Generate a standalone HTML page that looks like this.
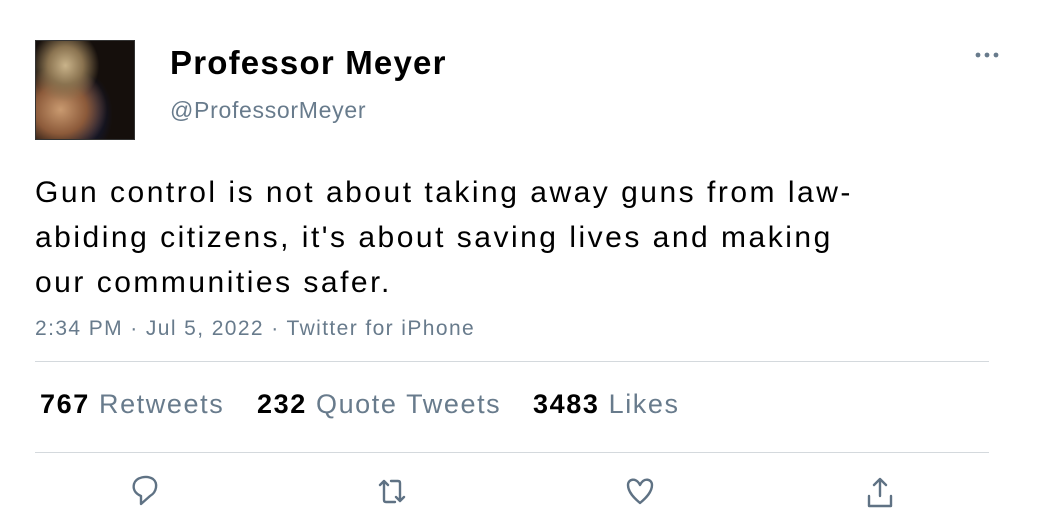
<html><head><style>
body{margin:0;width:1050px;height:525px;background:#fff;font-family:"Liberation Sans",sans-serif;position:relative;overflow:hidden}
.a{position:absolute}
.g{color:#687b8c}
.s{position:absolute;top:389px;font-size:27px;letter-spacing:1.6px;white-space:nowrap}
</style></head><body>
<div class="a" style="left:35px;top:40px;width:100px;height:100px;background:radial-gradient(ellipse at 30% 25%,#c9b38a 0,#8a7350 18%,transparent 35%),radial-gradient(ellipse at 25% 70%,#c99a70 0,#8c5a3a 25%,transparent 45%),radial-gradient(ellipse at 50% 75%,#1c2040 0,#141830 20%,transparent 40%),#150f0c;border:1px solid #333;box-sizing:border-box"></div>
<div class="a" style="left:170px;top:44px;font-size:33px;font-weight:bold;color:#000;letter-spacing:1.2px">Professor Meyer</div>
<div class="a g" style="left:170px;top:97px;font-size:23px;letter-spacing:0.7px">@ProfessorMeyer</div>
<svg class="a" style="left:970px;top:48px" width="34" height="14" fill="#687b8c"><circle cx="8" cy="7" r="2.4"/><circle cx="17" cy="7" r="2.4"/><circle cx="26" cy="7" r="2.4"/></svg>
<div class="a" style="left:35px;top:170px;font-size:30px;line-height:45px;color:#000;width:900px;letter-spacing:2.5px">Gun control is not about taking away guns from law-<br>abiding citizens, it's about saving lives and making<br>our communities safer.</div>
<div class="a g" style="left:35px;top:317px;font-size:21px;letter-spacing:1.4px">2:34 PM · Jul 5, 2022 · Twitter for iPhone</div>
<div class="a" style="left:35px;top:361px;width:954px;height:1px;background:#d4d9dd"></div>
<div class="s" style="left:40px"><b>767</b> <span class="g">Retweets</span></div>
<div class="s" style="left:257px"><b>232</b> <span class="g">Quote Tweets</span></div>
<div class="s" style="left:533px"><b>3483</b> <span class="g">Likes</span></div>
<div class="a" style="left:35px;top:452px;width:954px;height:1px;background:#d4d9dd"></div>
<svg class="a" style="left:0;top:0" width="1050" height="525" fill="none" stroke="#5f7284" stroke-width="2.4" stroke-linecap="round" stroke-linejoin="round">
<path d="M141 504 L141 496 C134 493 133 488 134 484 C136 477 147 475 153 479 C158 483 157 492 150 496 Z"/>
<path d="M380 485 L384 481 L388 485 M384 481 L384 500 Q384 502 386 502 L395 502 M391 481 L398 481 Q400 481 400 483 L400 501 M396 497 L400 501 L404 497"/>
<path d="M640 485 C636 477 628 479 628 485 C628 492 634 498 640 503 C646 498 652 492 652 485 C652 479 644 477 640 485 Z"/>
<path d="M880 480 L880 496 M874 485 L880 479 L886 485 M869 496 L869 506 L891 506 L891 496"/>
</svg>
</body></html>
